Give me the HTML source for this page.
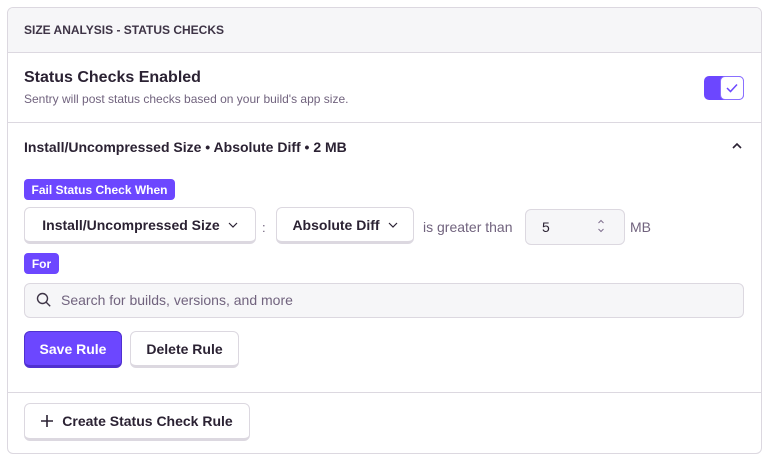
<!DOCTYPE html>
<html><head><style>
*{box-sizing:border-box;margin:0;padding:0}
body{width:765px;height:460px;background:#fff;font-family:"Liberation Sans",sans-serif;color:#2b2233;position:relative;overflow:hidden}
.a{position:absolute}
.card{left:7px;top:7px;width:755px;height:447px;border:1px solid #dcd8e0;border-radius:6px;overflow:hidden}
.btn{position:absolute;border:1px solid #dcd8e0;border-bottom-width:3px;border-radius:6px;background:#fff;font-weight:bold;font-size:14px;display:flex;align-items:center;justify-content:center;color:#2b2233}
.badge{position:absolute;background:#6c47ff;color:#fff;font-weight:bold;font-size:12px;border-radius:4px;display:flex;align-items:center;justify-content:center;height:21px}
</style></head><body>
<div class="a card">
 <div class="a" style="left:0;top:0;width:755px;height:45px;background:#f6f6f8;border-bottom:1px solid #dcd8e0"></div>
 <div class="a" style="left:0;top:114px;width:755px;height:1px;background:#dcd8e0"></div>
 <div class="a" style="left:0;top:384px;width:755px;height:1px;background:#dcd8e0"></div>
</div>
<div class="a" style="left:24px;top:23px;font-size:12px;font-weight:bold;color:#3e3446">SIZE ANALYSIS - STATUS CHECKS</div>
<div class="a" style="left:24px;top:69px;font-size:16px;font-weight:bold">Status Checks Enabled</div>
<div class="a" style="left:24px;top:92px;font-size:12px;color:#71637e">Sentry will post status checks based on your build's app size.</div>
<div class="a" style="left:704px;top:76px;width:40px;height:24px;border-radius:5px;background:#6c47ff"></div>
<div class="a" style="left:720px;top:76px;width:24px;height:24px;border-radius:5px;background:#fff;border:1px solid #8a70ff;display:flex;align-items:center;justify-content:center"><svg width="12" height="10" viewBox="0 0 12 10"><path d="M1 5l3.5 3.5L11 1.5" fill="none" stroke="#6c47ff" stroke-width="1.5"/></svg></div>
<div class="a" style="left:24px;top:139px;font-size:14px;font-weight:bold">Install/Uncompressed Size • Absolute Diff • 2 MB</div>
<svg class="a" style="left:731px;top:142px" width="12" height="8" viewBox="0 0 12 8"><path d="M2 6l4-4 4 4" fill="none" stroke="#2b2233" stroke-width="1.6"/></svg>
<div class="badge" style="left:24px;top:179px;width:151px">Fail Status Check When</div>
<div class="btn" style="left:24px;top:207px;width:232px;height:37px;font-size:14px">Install/Uncompressed Size <svg style="margin-left:8px" width="10" height="6" viewBox="0 0 10 6"><path d="M1 1l4 4 4-4" fill="none" stroke="#2b2233" stroke-width="1.2"/></svg></div>
<div class="a" style="left:262px;top:220px;font-size:13px;color:#71637e">:</div>
<div class="btn" style="left:276px;top:207px;width:138px;height:37px">Absolute Diff <svg style="margin-left:8px" width="10" height="6" viewBox="0 0 10 6"><path d="M1 1l4 4 4-4" fill="none" stroke="#2b2233" stroke-width="1.2"/></svg></div>
<div class="a" style="left:423px;top:219px;font-size:14px;color:#71637e">is greater than</div>
<div class="a" style="left:525px;top:209px;width:100px;height:36px;border:1px solid #dcd8e0;border-radius:6px;background:#f6f6f8"></div>
<div class="a" style="left:542px;top:219px;font-size:14px">5</div>
<svg class="a" style="left:597px;top:219px" width="8" height="14" viewBox="0 0 8 14"><path d="M1.5 4l2.5-2.5L6.5 4M1.5 10l2.5 2.5 2.5-2.5" fill="none" stroke="#80708f" stroke-width="1"/></svg>
<div class="a" style="left:630px;top:219px;font-size:14px;color:#71637e">MB</div>
<div class="badge" style="left:24px;top:253px;width:35px">For</div>
<div class="a" style="left:24px;top:283px;width:720px;height:35px;border:1px solid #dcd8e0;border-radius:6px;background:#f6f6f8"></div>
<svg class="a" style="left:36px;top:292px" width="16" height="16" viewBox="0 0 16 16"><circle cx="6.5" cy="6.5" r="5" fill="none" stroke="#3e3446" stroke-width="1.4"/><path d="M10.2 10.2l4 4" stroke="#3e3446" stroke-width="1.4"/></svg>
<div class="a" style="left:61px;top:292px;font-size:14px;color:#71637e">Search for builds, versions, and more</div>
<div class="btn" style="left:24px;top:331px;width:98px;height:37px;background:#6c47ff;color:#fff;border-color:#5030d0">Save Rule</div>
<div class="btn" style="left:130px;top:331px;width:109px;height:37px">Delete Rule</div>
<div class="btn" style="left:24px;top:403px;width:226px;height:38px"><svg style="margin-right:9px" width="12" height="12" viewBox="0 0 12 12"><path d="M6 0v12M0 6h12" stroke="#2b2233" stroke-width="1.6"/></svg>Create Status Check Rule</div>
</body></html>
